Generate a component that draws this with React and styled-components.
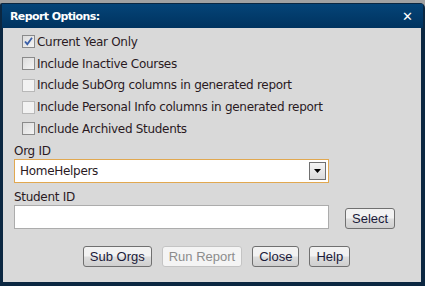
import React from "react";
import styled, { createGlobalStyle } from "styled-components";

const Global = createGlobalStyle`
  html, body { margin: 0; padding: 0; background: #a2a2a2; }
  body { width: 425px; height: 286px; overflow: hidden; }
`;

const Dialog = styled.div`
  margin-top: 3px;
  width: 425px;
  height: 283px;
  box-sizing: border-box;
  background: #0b2741;
  border-top-right-radius: 5px;
  border-top-left-radius: 2px;
  padding: 1px 4px 4px 2px;
  display: flex;
  flex-direction: column;
`;

const TitleBar = styled.div`
  height: 24px;
  flex: none;
  margin-right: -2px;
  background: linear-gradient(#054478, #00335f);
  display: flex;
  align-items: center;
  justify-content: space-between;
  padding: 0 10px 0 8px;
  color: #fff;
  font-family: "DejaVu Sans", Tahoma, sans-serif;
  font-weight: bold;
  font-size: 11px;
  letter-spacing: -0.6px;
`;

const Close = styled.span`
  font-size: 13px;
  font-weight: bold;
  line-height: 1;
  letter-spacing: 0;
`;

const Body = styled.div`
  flex: 1;
  background: #d9d9d9;
  margin-left: 1px;
  padding: 3px 0 0 11px;
  font-family: "DejaVu Sans", Tahoma, sans-serif;
  font-size: 12px;
  letter-spacing: -0.3px;
  color: #2a1a1f;
  display: flex;
  flex-direction: column;
`;

const CheckList = styled.div`
  display: flex;
  flex-direction: column;
  padding-left: 8px;
`;

const CheckRow = styled.label`
  display: flex;
  align-items: center;
  height: 21.75px;
  gap: 2px;
`;

const Box = styled.span`
  width: 11px;
  height: 11px;
  flex: none;
  border: 1px solid ${(p) => (p.$light ? "#b8b8b8" : "#8a8a8a")};
  background: ${(p) => (p.$light ? "#f2f2f2" : "linear-gradient(135deg,#dcdcdc,#f4f4f4)")};
  display: flex;
  align-items: center;
  justify-content: center;
`;

const Label = styled.div`
  margin-top: ${(p) => p.$gap}px;
  height: 15px;
  line-height: 15px;
`;

const SelectBox = styled.div`
  width: 315px;
  height: 24px;
  box-sizing: border-box;
  border: 1px solid #e1a850;
  background: #fff;
  display: flex;
  align-items: center;
  justify-content: space-between;
  padding: 0 2px 0 5px;
`;

const DropBtn = styled.span`
  width: 17px;
  height: 18px;
  box-sizing: border-box;
  border: 1px solid #707070;
  background: linear-gradient(#f4f4f4, #dcdcdc);
  display: flex;
  align-items: center;
  justify-content: center;
`;

const InputRow = styled.div`
  display: flex;
  align-items: flex-end;
  gap: 16px;
`;

const TextInput = styled.div`
  width: 315px;
  height: 24px;
  box-sizing: border-box;
  border: 1px solid #acacac;
  background: #fff;
`;

const Button = styled.button`
  height: 21px;
  padding: 0 6px;
  box-sizing: border-box;
  font-family: "Liberation Sans", Arial, sans-serif;
  font-size: 13px;
  letter-spacing: 0;
  color: ${(p) => (p.disabled ? "#8c8c8c" : "#1a1a3a")};
  border: 1px solid ${(p) => (p.disabled ? "#c4c4c4" : "#707070")};
  border-radius: 3px;
  background: ${(p) => (p.disabled ? "#f4f4f4" : "linear-gradient(#f2f2f2 45%, #dddddd 55%, #cfcfcf)")};
  line-height: 19px;
`;

const ButtonBar = styled.div`
  display: flex;
  justify-content: center;
  gap: 10px;
  margin-top: 17px;
  padding-right: 2px;
`;

const Check = () => (
  <svg width="11" height="11" viewBox="0 0 11 11">
    <path d="M2 5.5 L4.3 8.2 L9 1.8" fill="none" stroke="#3a5fa8" strokeWidth="1.8" />
  </svg>
);

const options = [
  { text: "Current Year Only", checked: true },
  { text: "Include Inactive Courses" },
  { text: "Include SubOrg columns in generated report", light: true },
  { text: "Include Personal Info columns in generated report", light: true },
  { text: "Include Archived Students" },
];

export default function App() {
  return (
    <>
      <Global />
      <Dialog>
        <TitleBar>
          <span>Report Options:</span>
          <Close>✕</Close>
        </TitleBar>
        <Body>
          <CheckList>
            {options.map((o) => (
              <CheckRow key={o.text}>
                <Box $light={o.light}>{o.checked && <Check />}</Box>
                <span>{o.text}</span>
              </CheckRow>
            ))}
          </CheckList>
          <Label $gap={4}>Org ID</Label>
          <SelectBox>
            <span>HomeHelpers</span>
            <DropBtn>
              <svg width="7" height="4" viewBox="0 0 7 4">
                <path d="M0 0 H7 L3.5 4 Z" fill="#000" />
              </svg>
            </DropBtn>
          </SelectBox>
          <Label $gap={7}>Student ID</Label>
          <InputRow>
            <TextInput />
            <Button>Select</Button>
          </InputRow>
          <ButtonBar>
            <Button>Sub Orgs</Button>
            <Button disabled>Run Report</Button>
            <Button>Close</Button>
            <Button>Help</Button>
          </ButtonBar>
        </Body>
      </Dialog>
    </>
  );
}
